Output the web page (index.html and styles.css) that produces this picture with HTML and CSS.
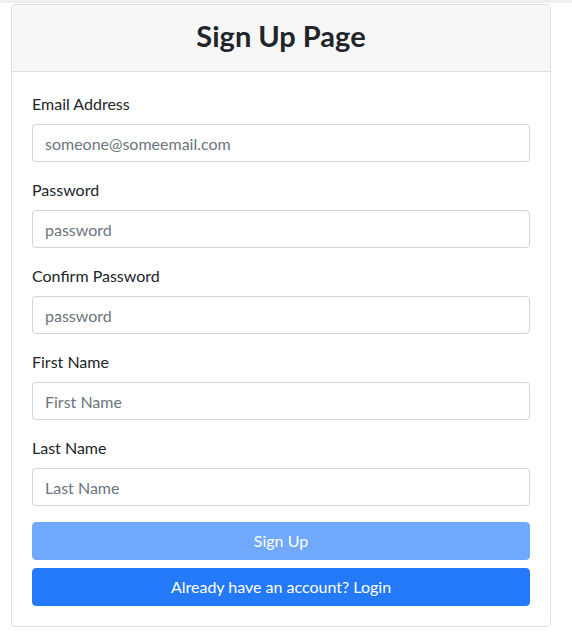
FILE: index.html
```html
<!DOCTYPE html>
<html lang="en">
<head>
<meta charset="utf-8">
<title>Sign Up</title>
<link rel="stylesheet" href="styles.css">
</head>
<body>
<div class="topbar"></div>
<div class="wrap">
  <div class="card">
    <div class="card-header">
      <h3 class="title">Sign Up Page</h3>
    </div>
    <form class="card-body">
      <div class="group">
        <label class="label">Email Address</label>
        <input class="input" type="email" placeholder="someone@someemail.com">
      </div>
      <div class="group">
        <label class="label">Password</label>
        <input class="input" type="password" placeholder="password">
      </div>
      <div class="group">
        <label class="label">Confirm Password</label>
        <input class="input" type="password" placeholder="password">
      </div>
      <div class="group">
        <label class="label">First Name</label>
        <input class="input" type="text" placeholder="First Name">
      </div>
      <div class="group">
        <label class="label">Last Name</label>
        <input class="input" type="text" placeholder="Last Name">
      </div>
      <button class="btn btn-disabled" type="button" disabled>Sign Up</button>
      <button class="btn btn-primary" type="button">Already have an account? Login</button>
    </form>
  </div>
</div>
</body>
</html>
```

FILE: styles.css
```css
* { box-sizing: border-box; }
body {
  margin: 0;
  font-family: Lato, "Open Sans", sans-serif;
  font-size: 16px;
  line-height: 1.5;
  color: #212529;
  background: #fff;
}
.topbar {
  height: 3px;
  background: #efefef;
}
.wrap {
  padding: 1px 21px 0 11px;
}
.card {
  width: 540px;
  border: 1px solid #dfdfdf;
  border-radius: 4px;
  display: flex;
  flex-direction: column;
}
.card-header {
  background: #f7f7f7;
  border-bottom: 1px solid #dfdfdf;
  padding: 12px 20px 8px;
  border-radius: 3px 3px 0 0;
}
.title {
  margin: 0 0 8px;
  text-align: center;
  font-size: 29px;
  font-weight: 700;
  line-height: 38px;
  height: 38px;
}
.card-body {
  margin: 0;
  padding: 20px;
  display: flex;
  flex-direction: column;
}
.group {
  display: flex;
  flex-direction: column;
  margin-bottom: 16px;
}
.label {
  line-height: 24px;
  margin-bottom: 8px;
}
.input {
  height: 38px;
  padding: 6px 12px;
  font: inherit;
  color: #495057;
  border: 1px solid #ced4da;
  border-radius: 4px;
  background: #fff;
}
.input::placeholder { color: #6c757d; opacity: 1; }
.btn {
  height: 38px;
  border: 1px solid transparent;
  border-radius: 4px;
  font: inherit;
  color: #fff;
  text-align: center;
  padding: 6px 12px;
}
.btn-disabled {
  background: #70a8fc;
  border-color: #70a8fc;
}
.btn-primary {
  margin-top: 8px;
  background: #2479f9;
  border-color: #2479f9;
}
```
